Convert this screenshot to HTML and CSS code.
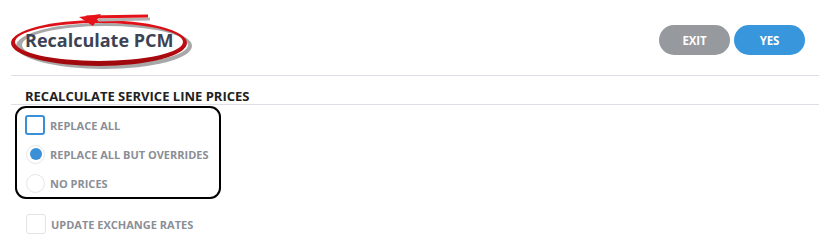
FILE: index.html
```html
<!DOCTYPE html>
<html>
<head>
<meta charset="utf-8">
<link rel="stylesheet" href="styles.css">
</head>
<body>
<div class="page">
  <header class="header">
    <svg class="annot" width="200" height="70" viewBox="0 0 200 70">
      <defs>
        <linearGradient id="rg" x1="0" y1="0" x2="0" y2="1">
          <stop offset="0" stop-color="#e5121a"/>
          <stop offset="1" stop-color="#9c070b"/>
        </linearGradient>
      </defs>
      <path fill="#a8a8a8" fill-rule="evenodd" d="M 16 46 a 88 23 0 1 0 176 0 a 88 23 0 1 0 -176 0 Z M 22 45 a 83 19 0 1 0 166 0 a 83 19 0 1 0 -166 0 Z"/>
      <path fill="url(#rg)" fill-rule="evenodd" d="M 11 43 a 88 23 0 1 0 176 0 a 88 23 0 1 0 -176 0 Z M 15 42 a 84 19 0 1 0 168 0 a 84 19 0 1 0 -168 0 Z"/>
      <line x1="98" y1="20" x2="150" y2="19" stroke="#b3b3b3" stroke-width="3"/>
      <line x1="86" y1="17" x2="148" y2="16" stroke="#e5121a" stroke-width="3"/>
      <polygon points="79,17 101,14 93,26" fill="#e5121a"/>
    </svg>
    <h1 class="title">Recalculate PCM</h1>
    <div class="actions">
      <button class="btn btn-exit">EXIT</button>
      <button class="btn btn-yes">YES</button>
    </div>
  </header>
  <section class="section">
    <h2 class="section-title">RECALCULATE SERVICE LINE PRICES</h2>
    <div class="options">
      <label class="opt"><span class="check check-focus"></span><span class="lbl">REPLACE ALL</span></label>
      <label class="opt"><span class="radio radio-on"></span><span class="lbl">REPLACE ALL BUT OVERRIDES</span></label>
      <label class="opt"><span class="radio"></span><span class="lbl">NO PRICES</span></label>
    </div>
    <label class="opt opt-extra"><span class="check"></span><span class="lbl">UPDATE EXCHANGE RATES</span></label>
  </section>
</div>
</body>
</html>
```
FILE: styles.css
```css
html, body {
  margin: 0;
  padding: 0;
  background: #fff;
  font-family: "Open Sans", "Liberation Sans", sans-serif;
}
.page {
  width: 819px;
  height: 247px;
  overflow: hidden;
}
.header {
  position: relative;
  margin-left: 11px;
  height: 76px;
  border-bottom: 1px solid #dedde9;
  display: flex;
  align-items: flex-start;
  justify-content: space-between;
  padding: 0 14px 0 14px;
  box-sizing: border-box;
}
.title {
  margin: 28px 0 0 0;
  font-size: 18px;
  line-height: 24px;
  font-weight: 700;
  color: #3c4354;
  position: relative;
  z-index: 1;
}
.annot {
  position: absolute;
  left: -11px;
  top: 0;
}
.actions {
  display: flex;
  gap: 4px;
  margin-top: 25px;
}
.btn {
  width: 71px;
  height: 30px;
  border: none;
  border-radius: 15px;
  color: #fff;
  font-family: "Open Sans", "Liberation Sans", sans-serif;
  font-weight: 700;
  font-size: 11.5px;
  letter-spacing: -0.2px;
  padding: 0;
}
.btn-exit { background: #96999d; }
.btn-yes { background: #3897dc; }
.section {
  margin-left: 11px;
}
.section-title {
  margin: 0;
  padding: 12px 0 0 14px;
  height: 29px;
  box-sizing: border-box;
  border-bottom: 1px solid #dedde9;
  font-size: 13px;
  font-weight: 700;
  color: #222;
  line-height: 16px;
}
.options {
  margin: 1px 0 0 4px;
  width: 206px;
  height: 93px;
  border: 2px solid #000;
  border-radius: 11px;
  box-sizing: border-box;
  display: flex;
  flex-direction: column;
  padding: 7px 0 0 8px;
  gap: 9px;
}
.opt {
  display: flex;
  align-items: center;
  gap: 5px;
  height: 20px;
}
.opt-extra {
  margin: 15px 0 0 15px;
}
.lbl {
  font-size: 11px;
  font-weight: 700;
  color: #8a8e96;
}
.check {
  width: 20px;
  height: 20px;
  box-sizing: border-box;
  border: 1px solid #e3e3e3;
  border-radius: 3px;
  background: #fff;
}
.check-focus {
  border: 2px solid #3a8fd6;
  border-radius: 3px;
}
.radio {
  width: 19px;
  height: 19px;
  margin-left: 1px;
  box-sizing: border-box;
  border: 1px solid #e6e6e6;
  border-radius: 50%;
  display: flex;
  align-items: center;
  justify-content: center;
  background: #fff;
}
.radio-on::after {
  content: "";
  width: 12px;
  height: 12px;
  border-radius: 50%;
  background: #3a8fd6;
}
```
